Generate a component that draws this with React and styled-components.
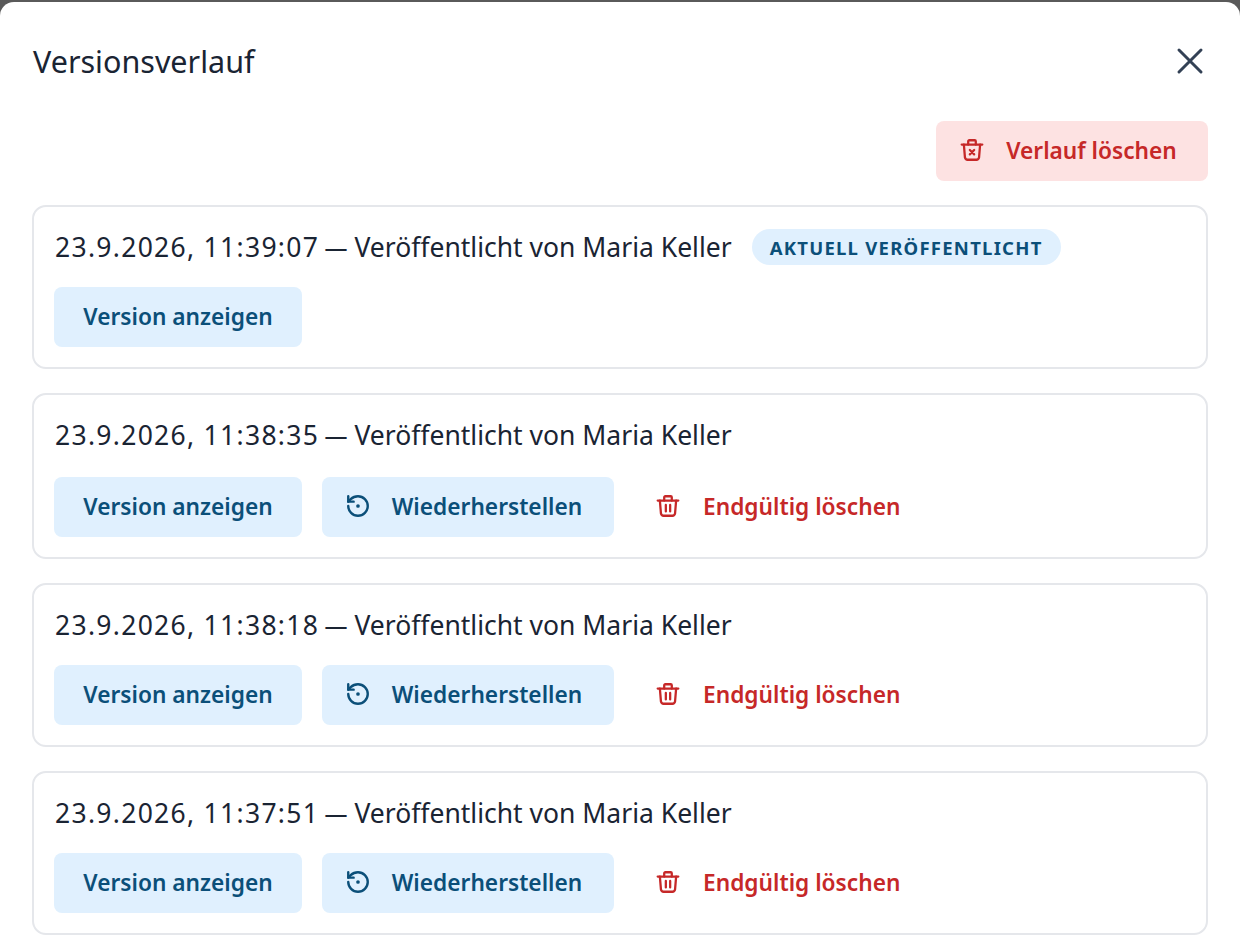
import React from "react";
import styled, { createGlobalStyle } from "styled-components";

const GlobalStyle = createGlobalStyle`
  html, body {
    margin: 0;
    height: 950px;
    overflow: hidden;
    background: #5a5a5a;
    font-family: "Noto Sans", "Open Sans", Arial, sans-serif;
  }
`;

const versions = [
  { id: 1, stamp: "23.9.2026, 11:39:07", current: true },
  { id: 2, stamp: "23.9.2026, 11:38:35", roomy: true },
  { id: 3, stamp: "23.9.2026, 11:38:18" },
  { id: 4, stamp: "23.9.2026, 11:37:51" },
];

const TrashIcon = ({ crossed }) => (
  <svg width="26" height="26" viewBox="0 0 24 24" fill="none" stroke="currentColor" strokeWidth="2.1" strokeLinecap="round" strokeLinejoin="round">
    <path d="M2.5 7h19" />
    <path d="M4.5 7l1 12a2.5 2.5 0 0 0 2.5 2h8a2.5 2.5 0 0 0 2.5-2l1-12" />
    <path d="M8.5 7V4a1 1 0 0 1 1-1h5a1 1 0 0 1 1 1v3" />
    {crossed ? (
      <path d="M10 12l4 4M14 12l-4 4" />
    ) : (
      <path d="M10 11v6M14 11v6" />
    )}
  </svg>
);

const RestoreIcon = () => (
  <svg width="26" height="26" viewBox="0 0 24 24" fill="none" stroke="currentColor" strokeWidth="2.2" strokeLinecap="round" strokeLinejoin="round">
    <path d="M3 12a9 9 0 1 0 9-9 9.75 9.75 0 0 0-6.74 2.74L3 8" />
    <path d="M3 3v5h5" />
    <circle cx="12" cy="12" r="1.7" fill="currentColor" stroke="none" />
  </svg>
);

const CloseIcon = () => (
  <svg width="28" height="28" viewBox="0 0 28 28" fill="none" stroke="currentColor" strokeWidth="3" strokeLinecap="round">
    <path d="M3 3l22 22M25 3L3 25" />
  </svg>
);

export default function App() {
  return (
    <>
      <GlobalStyle />
      <Dialog>
        <Header>
          <Title>Versionsverlauf</Title>
          <CloseButton aria-label="Schließen">
            <CloseIcon />
          </CloseButton>
        </Header>
        <Toolbar>
          <ClearButton>
            <TrashIcon crossed />
            Verlauf löschen
          </ClearButton>
        </Toolbar>
        <List>
          {versions.map((v) => (
            <Card key={v.id} $roomy={v.roomy}>
              <Meta>
                <MetaText>
                  <Stamp>{v.stamp}</Stamp> <Dash>—</Dash> Veröffentlicht von Maria Keller
                </MetaText>
                {v.current && <Badge>Aktuell veröffentlicht</Badge>}
              </Meta>
              <Actions>
                <Button $wide="248px">Version anzeigen</Button>
                {!v.current && (
                  <>
                    <Button $wide="292px" $iconed>
                      <RestoreIcon />
                      Wiederherstellen
                    </Button>
                    <DangerLink>
                      <TrashIcon />
                      Endgültig löschen
                    </DangerLink>
                  </>
                )}
              </Actions>
            </Card>
          ))}
        </List>
      </Dialog>
    </>
  );
}

const Dialog = styled.div`
  margin-top: 2px;
  height: 948px;
  box-sizing: border-box;
  padding: 0 32px;
  background: #ffffff;
  border-radius: 14px 14px 0 0;
  overflow: hidden;
`;

const Header = styled.div`
  height: 119px;
  box-sizing: border-box;
  padding: 0 4px 0 0;
  display: flex;
  align-items: flex-start;
  justify-content: space-between;
`;

const Title = styled.h2`
  margin: 37px 0 0 1px;
  font-size: 30.5px;
  line-height: 44px;
  font-weight: 400;
  color: #1a2433;
`;

const CloseButton = styled.button`
  margin-top: 45px;
  padding: 0;
  border: 0;
  background: none;
  color: #334155;
  display: flex;
`;

const Toolbar = styled.div`
  display: flex;
  justify-content: flex-end;
  margin-bottom: 24px;
`;

const ClearButton = styled.button`
  width: 272px;
  height: 60px;
  padding: 0 8px 2px 0;
  border: 0;
  border-radius: 8px;
  background: #fde2e2;
  color: #c62828;
  font: 600 22.7px "Noto Sans", sans-serif;
  display: flex;
  align-items: center;
  justify-content: center;
  gap: 21px;
`;

const List = styled.div`
  display: flex;
  flex-direction: column;
  gap: 24px;
`;

const Card = styled.div`
  box-sizing: border-box;
  height: ${(p) => (p.$roomy ? "166px" : "164px")};
  padding: 20px 20px;
  border: 2px solid #e5e7eb;
  border-radius: 14px;
  background: #fff;
  display: flex;
  flex-direction: column;
  gap: ${(p) => (p.$roomy ? "24px" : "22px")};
`;

const Meta = styled.div`
  height: 38px;
  display: flex;
  align-items: center;
  gap: 20px;
`;

const MetaText = styled.span`
  margin-left: 1px;
  padding-top: 2px;
  font-size: 26.5px;
  color: #1a2433;
`;

const Stamp = styled.span`
  letter-spacing: 1.3px;
  margin-right: -1.5px;
`;

const Dash = styled.span`
  font-size: 23px;
  font-weight: 500;
  vertical-align: 1px;
`;

const Badge = styled.span`
  height: 36px;
  margin-top: 2px;
  padding: 0 18px;
  border-radius: 18px;
  background: #e0f0fe;
  color: #0b4f79;
  font-size: 18.5px;
  font-weight: 700;
  letter-spacing: 1.25px;
  text-transform: uppercase;
  display: flex;
  align-items: center;
`;

const Actions = styled.div`
  display: flex;
  align-items: center;
  gap: 20px;
`;

const Button = styled.button`
  width: ${(p) => p.$wide};
  height: 60px;
  padding: 0 ${(p) => (p.$iconed ? "9px" : "0")} 2px 0;
  border: 0;
  border-radius: 8px;
  background: #e0f0fe;
  color: #0b4f79;
  font: 600 22.7px "Noto Sans", sans-serif;
  display: flex;
  align-items: center;
  justify-content: center;
  gap: 21px;
`;

const DangerLink = styled.button`
  height: 60px;
  padding: 0 0 2px 21px;
  border: 0;
  background: none;
  color: #c62828;
  font: 600 22.7px "Noto Sans", sans-serif;
  display: flex;
  align-items: center;
  gap: 22px;
`;
